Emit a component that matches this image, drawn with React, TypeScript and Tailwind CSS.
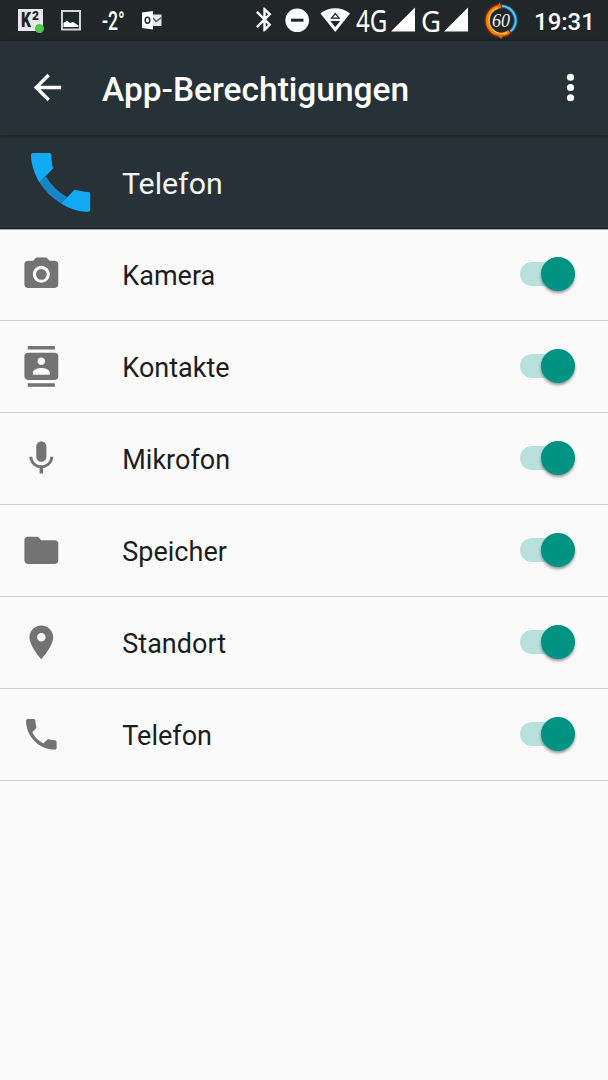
import type { ReactNode } from "react";

const permissions = [
  {
    label: "Kamera",
    path: "M9 2L7.17 4H4c-1.1 0-2 .9-2 2v12c0 1.1.9 2 2 2h16c1.1 0 2-.9 2-2V6c0-1.1-.9-2-2-2h-3.17L15 2H9zm3 15c-2.76 0-5-2.24-5-5s2.24-5 5-5 5 2.24 5 5-2.24 5-5 5zM12 8.8a3.2 3.2 0 1 0 0 6.4a3.2 3.2 0 1 0 0-6.4z",
  },
  {
    label: "Kontakte",
    path: "M20 0H4v2h16V0zM4 24h16v-2H4v2zM20 4H4c-1.1 0-2 .9-2 2v12c0 1.1.9 2 2 2h16c1.1 0 2-.9 2-2V6c0-1.1-.9-2-2-2zm-8 2.75c1.24 0 2.25 1.01 2.25 2.25s-1.01 2.25-2.25 2.25S9.75 10.24 9.75 9 10.76 6.75 12 6.75zM17 17H7v-1.5c0-1.67 3.33-2.5 5-2.5s5 .83 5 2.5V17z",
  },
  {
    label: "Mikrofon",
    path: "M12 14c1.66 0 2.99-1.34 2.99-3L15 5c0-1.66-1.34-3-3-3S9 3.34 9 5v6c0 1.66 1.34 3 3 3zm5.3-3c0 3-2.54 5.1-5.3 5.1S6.7 14 6.7 11H5c0 3.41 2.72 6.23 6 6.72V21h2v-3.28c3.28-.48 6-3.3 6-6.72h-1.7z",
  },
  {
    label: "Speicher",
    path: "M10 4H4c-1.1 0-1.99.9-1.99 2L2 18c0 1.1.9 2 2 2h16c1.1 0 2-.9 2-2V8c0-1.1-.9-2-2-2h-8l-2-2z",
  },
  {
    label: "Standort",
    path: "M12 2C8.13 2 5 5.13 5 9c0 5.25 7 13 7 13s7-7.75 7-13c0-3.87-3.13-7-7-7zm0 9.5c-1.38 0-2.5-1.12-2.5-2.5s1.12-2.5 2.5-2.5 2.5 1.12 2.5 2.5-1.12 2.5-2.5 2.5z",
  },
  {
    label: "Telefon",
    path: "M6.62 10.79c1.44 2.83 3.76 5.14 6.59 6.59l2.2-2.2c.27-.27.67-.36 1.02-.24 1.12.37 2.33.57 3.57.57.55 0 1 .45 1 1V20c0 .55-.45 1-1 1-9.39 0-17-7.61-17-17 0-.55.45-1 1-1h3.5c.55 0 1 .45 1 1 0 1.25.2 2.45.57 3.57.11.35.03.74-.25 1.02l-2.2 2.2z",
  },
];

function Slot({ className, children }: { className: string; children: ReactNode }) {
  return <div className={`flex h-full shrink-0 items-center ${className}`}>{children}</div>;
}

function Signal() {
  return (
    <svg className="h-10 w-6 shrink-0" viewBox="0 0 24 40" fill="#fff">
      <path d="M24 7.5V31.5H0z" />
    </svg>
  );
}

function BatteryRing() {
  return (
    <svg className="ml-[15px] h-[41px] w-9 shrink-0" viewBox="0 0 36 41" fill="none">
      <path d="M18 6a14.5 14.5 0 0 1 9 26" stroke="#1b5d80" strokeWidth="4" />
      <path d="M18 6a14.5 14.5 0 0 1 9 26" stroke="#55c5f4" strokeWidth="2" />
      <path d="M19 6C9 6 4 13 4 20.5S9 35 18 35c4 0 7-1 9-4" stroke="#6b2a0a" strokeWidth="5.5" />
      <path d="M18 6.5C10 7 4.5 13 4.5 20.5S10 34.5 18 34.5c4 0 6-1 8-3" stroke="#f07a10" strokeWidth="3.5" />
      <path d="M15 8C9 10 6 14.5 6 20.5s4 11 10 13c4 1 6 0 8-1" stroke="#ffc332" strokeWidth="1.5" />
      <path d="M14 7l3-5v3l3 1zM13 34l5 5 3-4z" fill="#d9620d" />
      <text
        x="18"
        y="27"
        textAnchor="middle"
        textLength="18"
        lengthAdjust="spacingAndGlyphs"
        fill="#f2f2f2"
        className="font-['Liberation_Serif'] text-[19px] italic"
      >
        60
      </text>
    </svg>
  );
}

function StatusBar() {
  return (
    <div className="flex h-[41px] items-start bg-[#212629] text-white">
      <Slot className="ml-[18px] w-[26px]">
        <div className="relative -mt-px flex h-[22px] w-[25px] items-center bg-[#e9e9e9] pl-[3px] text-[#202528]">
          <span className="w-[11px] origin-left scale-x-[0.78] text-[20px] leading-none font-black">K</span>
          <span className="mb-2 text-[12px] leading-none font-black">2</span>
          <span className="absolute -right-px -bottom-[2px] size-[9px] rounded-full bg-[#4cc94f]" />
        </div>
      </Slot>
      <svg className="ml-[17px] h-10 w-5 shrink-0" viewBox="0 0 20 40">
        <path d="M1 11h18v18.5H1z" fill="none" stroke="#d2d4d5" strokeWidth="2" />
        <path d="M2.5 27v-4l3.5-2.5 3 2.5 3-1 5.5 3.5V27z" fill="#fff" />
      </svg>
      <Slot className="ml-[21px] w-[23px]">
        <span className="origin-left scale-x-[0.68] text-[26px] leading-none font-medium">-2°</span>
      </Slot>
      <svg className="ml-[17px] h-10 w-5 shrink-0" viewBox="0 0 20 40">
        <path d="M9 14.5h10.5v11.5H9z" fill="#e4e5e6" />
        <path d="M11 18l3 3.5 5.5-4" fill="none" stroke="#50565a" strokeWidth="1.3" />
        <path d="M0 12.5L11 11v18.5L0 28z" fill="#fff" />
        <ellipse cx="5.5" cy="20.3" rx="2.3" ry="3" fill="none" stroke="#212629" strokeWidth="1.5" />
      </svg>
      <svg className="mt-[5px] ml-[88px] size-[29px] shrink-0" viewBox="0 0 24 24" fill="#fff">
        <path d="M17.71 7.71L12 2h-1v7.59L6.41 5 5 6.41 10.59 12 5 17.59 6.41 19 11 14.41V22h1l5.71-5.71-4.3-4.29 4.3-4.29zM13 5.83l1.88 1.88L13 9.59V5.83zm1.88 10.46L13 18.17v-3.76l1.88 1.88z" />
      </svg>
      <svg className="ml-[6px] h-10 w-6 shrink-0" viewBox="0 0 24 40">
        <circle cx="12.2" cy="20.3" r="11.8" fill="#fff" />
        <path d="M6 18.7h12.5v3H6z" fill="#212629" />
      </svg>
      <svg className="ml-[11px] h-10 w-[31px] shrink-0" viewBox="0 0 31 40">
        <path d="M.5 13.5C9 6.5 21.5 6.5 30 13.5L15.300 32z" fill="#fff" />
        <path d="M11.5 18.2l3.800-4.700 3.800 4.700z" fill="none" stroke="#212629" strokeWidth="1.3" />
        <path d="M10.3 21h10l-5 6z" fill="#212629" />
      </svg>
      <Slot className="ml-[5px] w-[31px]">
        <span className="origin-left scale-x-[0.78] font-['Noto_Sans'] text-[31px] leading-none">4G</span>
      </Slot>
      <div className="ml-[4px]">
        <Signal />
      </div>
      <Slot className="ml-[6px] w-5">
        <span className="origin-left scale-x-[0.95] font-['Noto_Sans'] text-[29px] leading-none">G</span>
      </Slot>
      <div className="ml-[3px]">
        <Signal />
      </div>
      <BatteryRing />
      <Slot className="ml-[15px]">
        <span className="mt-[2px] text-[24px] leading-none font-medium">19:31</span>
      </Slot>
    </div>
  );
}

function Toggle() {
  return (
    <div className="relative -mt-px flex h-[34px] w-[55px] items-center">
      <div className="h-6 w-12 rounded-full bg-[#b8e0dc]" />
      <div className="absolute right-0 size-[34px] rounded-full bg-[#009384] shadow-[0_2px_3px_rgba(0,0,0,0.4)]" />
    </div>
  );
}

function PermissionRow({ label, path }: { label: string; path: string }) {
  return (
    <div className="flex h-[92px] items-center border-b border-[#cfcfcf] pr-[33px] pl-[21px]">
      <svg className="-mt-px size-[41px] shrink-0" viewBox="0 0 24.2 24.2" fill="#737373">
        <path d={path} />
      </svg>
      <span className="mt-[3px] ml-[60.3px] flex-1 text-[27px] leading-8 text-[#1c1d1e]">{label}</span>
      <Toggle />
    </div>
  );
}

export default function App() {
  return (
    <div className="flex h-[1080px] w-[608px] flex-col overflow-hidden bg-[#fafafa] font-[Roboto,sans-serif]">
      <StatusBar />
      <header className="relative z-10 flex h-[94px] items-center bg-[#273238] text-white shadow-[0_1px_5px_rgba(0,0,0,0.35)]">
        <svg className="-mt-px ml-[27px] size-[41px]" viewBox="0 0 24 24" fill="#fff">
          <path d="M20 11H7.83l5.59-5.59L12 4l-8 8 8 8 1.41-1.41L7.83 13H20v-2z" />
        </svg>
        <h1 className="mt-[3px] ml-[34px] flex-1 text-[33.5px] leading-10 font-medium">App-Berechtigungen</h1>
        <svg className="-mt-px mr-[17px] size-[41px]" viewBox="0 0 24 24" fill="#fff">
          <circle cx="12" cy="6" r="2.100" />
          <circle cx="12" cy="12" r="2.100" />
          <circle cx="12" cy="18" r="2.100" />
        </svg>
      </header>
      <div className="relative flex h-[94px] items-center border-b border-[#141c22] bg-[#273238] shadow-[0_1px_0_#a5abae]">
        <svg className="ml-[25px] size-[72px]" viewBox="0 0 72 72">
          <path d="M14.5 36.5L21 30.3C26 39 33 46 42 51L36 57.5C27 52 20 45 14.5 36.5z" fill="#1686c8" />
          <path d="M8 7H24.5q1.8 0 1.8 1.8C26.3 14 27 18 28 22.5L14.5 36.5C9 27 6 17 6 9q0-2 2-2z" fill="#12a9f5" />
          <path
            d="M36 57.5L49.5 43.8C54 45 59 45.8 63.500 46q1.700 0 1.700 1.700V64q0 1.800-2 1.800C53 65.800 44 62.500 36 57.500z"
            fill="#12a9f5"
          />
        </svg>
        <span className="mt-[4px] ml-[25px] text-[30.3px] leading-9 text-[#f3f4f4]">Telefon</span>
      </div>
      <main>
        {permissions.map((item) => (
          <PermissionRow key={item.label} label={item.label} path={item.path} />
        ))}
      </main>
    </div>
  );
}
